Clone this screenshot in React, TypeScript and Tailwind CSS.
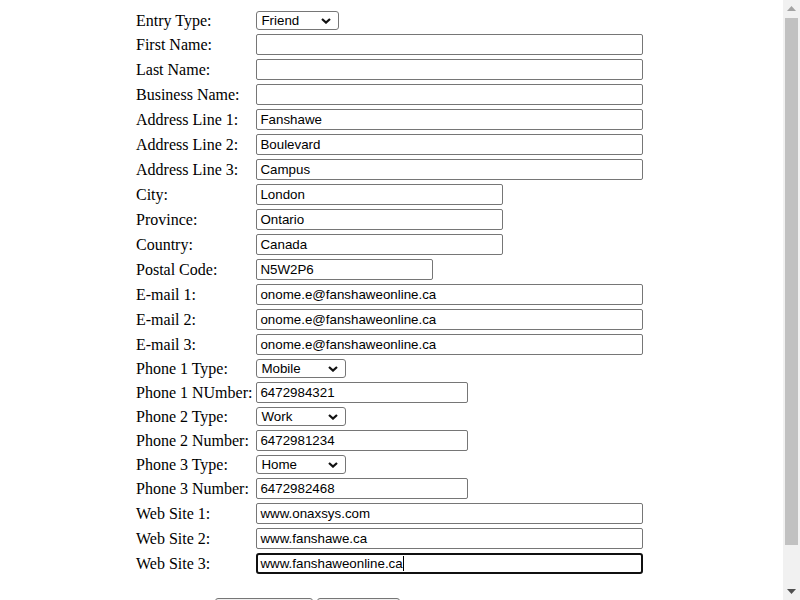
import React from "react";

type Row =
  | { label: string; kind: "input"; value: string; w: string }
  | { label: string; kind: "select"; value: string; w: string; options: string[] }
  | { label: string; kind: "focused"; value: string; w: string };

const rows: Row[] = [
  { label: "Entry Type:", kind: "select", value: "Friend", w: "w-[83px]", options: ["Friend", "Family", "Business"] },
  { label: "First Name:", kind: "input", value: "", w: "w-[387px]" },
  { label: "Last Name:", kind: "input", value: "", w: "w-[387px]" },
  { label: "Business Name:", kind: "input", value: "", w: "w-[387px]" },
  { label: "Address Line 1:", kind: "input", value: "Fanshawe", w: "w-[387px]" },
  { label: "Address Line 2:", kind: "input", value: "Boulevard", w: "w-[387px]" },
  { label: "Address Line 3:", kind: "input", value: "Campus", w: "w-[387px]" },
  { label: "City:", kind: "input", value: "London", w: "w-[247px]" },
  { label: "Province:", kind: "input", value: "Ontario", w: "w-[247px]" },
  { label: "Country:", kind: "input", value: "Canada", w: "w-[247px]" },
  { label: "Postal Code:", kind: "input", value: "N5W2P6", w: "w-[177px]" },
  { label: "E-mail 1:", kind: "input", value: "onome.e@fanshaweonline.ca", w: "w-[387px]" },
  { label: "E-mail 2:", kind: "input", value: "onome.e@fanshaweonline.ca", w: "w-[387px]" },
  { label: "E-mail 3:", kind: "input", value: "onome.e@fanshaweonline.ca", w: "w-[387px]" },
  { label: "Phone 1 Type:", kind: "select", value: "Mobile", w: "w-[90px]", options: ["Mobile", "Work", "Home"] },
  { label: "Phone 1 NUmber:", kind: "input", value: "6472984321", w: "w-[212px]" },
  { label: "Phone 2 Type:", kind: "select", value: "Work", w: "w-[90px]", options: ["Mobile", "Work", "Home"] },
  { label: "Phone 2 Number:", kind: "input", value: "6472981234", w: "w-[212px]" },
  { label: "Phone 3 Type:", kind: "select", value: "Home", w: "w-[90px]", options: ["Mobile", "Work", "Home"] },
  { label: "Phone 3 Number:", kind: "input", value: "6472982468", w: "w-[212px]" },
  { label: "Web Site 1:", kind: "input", value: "www.onaxsys.com", w: "w-[387px]" },
  { label: "Web Site 2:", kind: "input", value: "www.fanshawe.ca", w: "w-[387px]" },
  { label: "Web Site 3:", kind: "focused", value: "www.fanshaweonline.ca", w: "w-[387px]" },
];

const sans = "font-['Liberation_Sans',Arial,sans-serif]";

function Field({ row }: { row: Row }) {
  if (row.kind === "select") {
    return (
      <div className={`relative ${row.w} h-[19px]`}>
        <select
          defaultValue={row.value}
          className={`${sans} appearance-none block w-full h-[19px] border border-[#767676] rounded-[3px] bg-white pl-[4px] pr-[20px] text-[13.333px] leading-[15px] text-black outline-none`}
        >
          {row.options.map((o) => (
            <option key={o}>{o}</option>
          ))}
        </select>
        <svg
          className="absolute right-[8px] top-[7px] pointer-events-none"
          width="10"
          height="6"
          viewBox="0 0 10 6"
        >
          <polyline points="1,1 5,4.6 9,1" fill="none" stroke="#111" strokeWidth="2.2" />
        </svg>
      </div>
    );
  }
  if (row.kind === "focused") {
    return (
      <div
        className={`${sans} ${row.w} h-[21px] flex items-center border-2 border-[#101010] rounded-[3px] bg-white pl-[2px] text-[13.333px] leading-[15px] text-black`}
      >
        <span className="whitespace-nowrap">{row.value}</span>
        <span className="inline-block w-[1px] h-[15px] bg-black" />
      </div>
    );
  }
  return (
    <input
      type="text"
      defaultValue={row.value}
      className={`${sans} block ${row.w} h-[21px] border border-[#767676] rounded-[2px] bg-white px-[3px] text-[13.333px] leading-[15px] text-black outline-none`}
    />
  );
}

function Scrollbar() {
  return (
    <div className="w-[17px] h-[600px] bg-[#f1f1f1] flex flex-col items-center shrink-0">
      <div className="h-[17px] w-full flex items-center justify-center">
        <svg width="9" height="5" viewBox="0 0 9 5">
          <polygon points="0,5 4.5,0 9,5" fill="#a3a3a3" />
        </svg>
      </div>
      <div className="w-[13px] h-[527px] bg-[#c1c1c1] mt-[1px]" />
      <div className="flex-1" />
      <div className="h-[17px] w-full flex items-center justify-center">
        <svg width="9" height="5" viewBox="0 0 9 5">
          <polygon points="0,0 9,0 4.5,5" fill="#505050" />
        </svg>
      </div>
    </div>
  );
}

export default function App() {
  return (
    <div className="flex w-[800px] h-[600px] overflow-hidden bg-white">
      <div className="w-[783px] h-[600px] overflow-hidden pt-2">
        <table className="ml-[133px] border-separate border-spacing-[2px] font-['Liberation_Serif','Times_New_Roman',serif] text-[16px] text-black">
          <tbody>
            {rows.map((r) => (
              <tr key={r.label}>
                <td className="p-[1px] w-[118px] whitespace-nowrap align-middle leading-[18px]">{r.label}</td>
                <td className="p-[1px] align-middle">
                  <Field row={r} />
                </td>
              </tr>
            ))}
          </tbody>
        </table>
        <div className="flex gap-[4px] ml-[215px] mt-[21px]">
          <button className={`${sans} w-[98px] h-[21px] border border-[#767676] rounded-[3px] bg-[#efefef] text-[13.333px]`}>
            Save Contact
          </button>
          <button className={`${sans} w-[83px] h-[21px] border border-[#767676] rounded-[3px] bg-[#efefef] text-[13.333px]`}>
            Clear Form
          </button>
        </div>
      </div>
      <Scrollbar />
    </div>
  );
}
